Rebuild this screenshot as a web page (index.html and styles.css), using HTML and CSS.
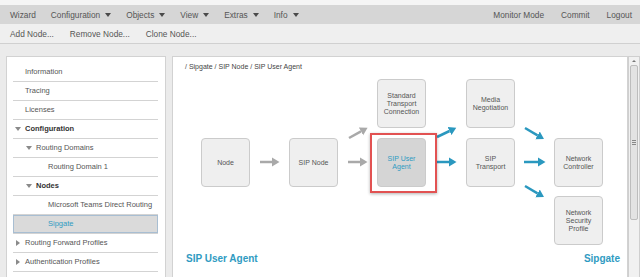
FILE: index.html
```html
<!DOCTYPE html>
<html lang="en">
<head>
  <meta charset="UTF-8" />
  <title>SIP User Agent</title>
  <link rel="stylesheet" href="styles.css">
</head>
<body>

<!-- Menu -->
<div class="menubar">
  <div class="menu-group">
    <span class="menu-item">Wizard</span>
    <span class="menu-item drop">Configuration</span>
    <span class="menu-item drop">Objects</span>
    <span class="menu-item drop">View</span>
    <span class="menu-item drop">Extras</span>
    <span class="menu-item drop">Info</span>
  </div>
  <div class="menu-group right">
    <span class="menu-item">Monitor Mode</span>
    <span class="menu-item">Commit</span>
    <span class="menu-item">Logout</span>
  </div>
</div>

<div class="toolbar">
  <span class="tool">Add Node...</span>
  <span class="tool">Remove Node...</span>
  <span class="tool">Clone Node...</span>
</div>

<div class="workspace">
  <div class="sidebar">
    <ul class="tree">
      <li>Information</li>
      <li>Tracing</li>
      <li>Licenses</li>
      <li class="strong"><span class="tw open"></span>Configuration</li>
      <li class="lvl1"><span class="tw open"></span>Routing Domains</li>
      <li class="lvl2">Routing Domain 1</li>
      <li class="lvl1 strong"><span class="tw open"></span>Nodes</li>
      <li class="lvl2">Microsoft Teams Direct Routing</li>
      <li class="lvl2 sel">Sipgate</li>
      <li><span class="tw closed"></span>Routing Forward Profiles</li>
      <li><span class="tw closed"></span>Authentication Profiles</li>
    </ul>
  </div>

  <div class="main">
    <div class="crumb">/ Sipgate / SIP Node / SIP User Agent</div>

    <div class="canvas">
      <svg class="arrows" width="454" height="180" viewBox="0 0 454 180">
        <defs>
          <marker id="headGray" markerUnits="userSpaceOnUse" markerWidth="9" markerHeight="10" viewBox="0 -5 9 10" refX="0" refY="0" orient="auto">
            <path d="M0,-4.5 L7.5,0 L0,4.5 Z" fill="#a9a9a9"/>
          </marker>
          <marker id="headTeal" markerUnits="userSpaceOnUse" markerWidth="9" markerHeight="10" viewBox="0 -5 9 10" refX="0" refY="0" orient="auto">
            <path d="M0,-4.5 L7.5,0 L0,4.5 Z" fill="#2a98bf"/>
          </marker>
        </defs>
        <g stroke="#a9a9a9" stroke-width="2.5" marker-end="url(#headGray)">
          <line x1="87" y1="90" x2="99" y2="90"/>
          <line x1="175" y1="90" x2="187" y2="90"/>
          <line x1="176" y1="66" x2="188" y2="59.4"/>
        </g>
        <g stroke="#2a98bf" stroke-width="2.5" marker-end="url(#headTeal)">
          <line x1="264" y1="65" x2="276.5" y2="59"/>
          <line x1="264" y1="90" x2="276" y2="90"/>
          <line x1="352" y1="56" x2="364.5" y2="63.3"/>
          <line x1="351" y1="90" x2="365" y2="90"/>
          <line x1="352" y1="114" x2="364.5" y2="121.3"/>
        </g>
      </svg>

      <div class="focus-frame"></div>

      <div class="box c1 r2">Node</div>
      <div class="box c2 r2">SIP Node</div>
      <div class="box c3 r1">Standard<br>Transport<br>Connection</div>
      <div class="box c3 r2 current">SIP User<br>Agent</div>
      <div class="box c4 r1">Media<br>Negotiation</div>
      <div class="box c4 r2">SIP<br>Transport</div>
      <div class="box c5 r2">Network<br>Controller</div>
      <div class="box c5 r3">Network<br>Security<br>Profile</div>
    </div>

    <div class="caption">
      <span>SIP User Agent</span>
      <span>Sipgate</span>
    </div>
  </div>

  <div class="vscroll">
    <div class="sb-up"></div>
    <div class="sb-thumb"><span class="grip"></span></div>
  </div>
</div>

</body>
</html>
```

FILE: styles.css
```css
body {
  margin: 0;
  padding: 0;
  background: #ebebeb;
  font-family: 'Liberation Sans', Arial, sans-serif;
  color: #555;
  overflow: hidden;
}
.menubar {
  display: flex;
  justify-content: space-between;
  align-items: center;
  height: 19px;
  border-top: 5px solid #f5f5f5;
  background: #d6d6d6;
  padding: 0 8px 0 10px;
  font-size: 8.3px;
}
.menu-group {
  display: flex;
  align-items: center;
  gap: 15px;
}
.menu-group.right {
  gap: 17px;
}
.menu-item {
  color: #555;
  white-space: nowrap;
}
.drop::after {
  content: "";
  display: inline-block;
  margin-left: 5px;
  vertical-align: middle;
  border-left: 3px solid transparent;
  border-right: 3px solid transparent;
  border-top: 4px solid #4a4a4a;
}
.toolbar {
  display: flex;
  align-items: center;
  gap: 16px;
  height: 19px;
  padding: 0 10px;
  background: #efefef;
  border-bottom: 1px solid #d0d0d0;
  font-size: 8.3px;
}
.workspace {
  display: flex;
  padding: 12px 0 0 6px;
  align-items: flex-start;
}
.sidebar {
  width: 160px;
  height: 221px;
  box-sizing: border-box;
  flex-shrink: 0;
  background: white;
  border: 1px solid #d2d2d2;
  border-bottom: none;
  padding-top: 6px;
  margin-right: 6px;
  overflow: hidden;
}
.tree {
  list-style: none;
  margin: 0 7px 0 6px;
  padding: 0;
  font-size: 7.5px;
}
.tree li {
  height: 18px;
  line-height: 18px;
  border-bottom: 1px solid #d3d3d3;
  padding-left: 12px;
  white-space: nowrap;
  color: #555;
}
.tree li.lvl1 {
  padding-left: 23px;
}
.tree li.lvl2 {
  padding-left: 35px;
}
.tree li.strong {
  font-weight: bold;
  color: #333;
}
.tree li.sel {
  background: #dadada;
  box-shadow: inset 0 0 0 1px #a8bed2;
  color: #2f9bc2;
}
.tw {
  display: inline-block;
  vertical-align: middle;
  width: 0;
  height: 0;
}
.tw.open {
  border-left: 3.5px solid transparent;
  border-right: 3.5px solid transparent;
  border-top: 4px solid #8a8a8a;
  margin-left: -10px;
  margin-right: 4px;
}
.tw.closed {
  border-top: 3.5px solid transparent;
  border-bottom: 3.5px solid transparent;
  border-left: 4px solid #8a8a8a;
  margin-left: -9px;
  margin-right: 5px;
}
.main {
  width: 456px;
  height: 221px;
  box-sizing: border-box;
  flex-shrink: 0;
  background: white;
  border: 1px solid #d2d2d2;
  border-bottom: none;
  overflow: hidden;
}
.crumb {
  padding: 5px 0 0 12px;
  height: 10px;
  line-height: 10px;
  font-size: 7px;
  color: #444;
}
.canvas {
  position: relative;
  height: 180px;
}
.arrows {
  position: absolute;
  left: 0;
  top: 0;
}
.box {
  position: absolute;
  width: 49px;
  height: 49px;
  box-sizing: border-box;
  border: 1px solid #cbcbcb;
  border-radius: 4px;
  background: #efefef;
  display: flex;
  align-items: center;
  justify-content: center;
  text-align: center;
  font-size: 7px;
  line-height: 8px;
  color: #555;
}
.box.current {
  background: #d5d5d5;
  color: #2f9bc2;
}
.c1 { left: 28px; }
.c2 { left: 116px; }
.c3 { left: 204px; }
.c4 { left: 293px; }
.c5 { left: 381px; }
.r1 { top: 7px; }
.r2 { top: 66px; }
.r3 { top: 124px; }
.focus-frame {
  position: absolute;
  left: 197px;
  top: 61px;
  width: 67px;
  height: 60px;
  box-sizing: border-box;
  border: 2px solid #e25252;
  box-shadow: 0 1px 3px rgba(0,0,0,0.3);
}
.caption {
  display: flex;
  justify-content: space-between;
  padding: 0 7px 0 13px;
  line-height: 14px;
  font-size: 10px;
  font-weight: bold;
  color: #2f9bc2;
}
.vscroll {
  width: 12px;
  height: 221px;
  box-sizing: border-box;
  background: #f1f1f1;
  border: 1px solid #cfcfcf;
  border-bottom: none;
  flex-shrink: 0;
}
.sb-up {
  height: 8px;
  position: relative;
}
.sb-up::after {
  content: "";
  position: absolute;
  left: 3px;
  top: 3px;
  border-left: 2px solid transparent;
  border-right: 2px solid transparent;
  border-bottom: 2px solid #777;
}
.sb-thumb {
  height: 155px;
  margin: 0 1px;
  box-sizing: border-box;
  background: #e3e3e3;
  border: 1px solid #bdbdbd;
  border-radius: 2px;
  display: flex;
  align-items: center;
  justify-content: center;
}
.grip {
  width: 4px;
  height: 5px;
  background: repeating-linear-gradient(#888 0 1px, transparent 1px 2px);
}
```
